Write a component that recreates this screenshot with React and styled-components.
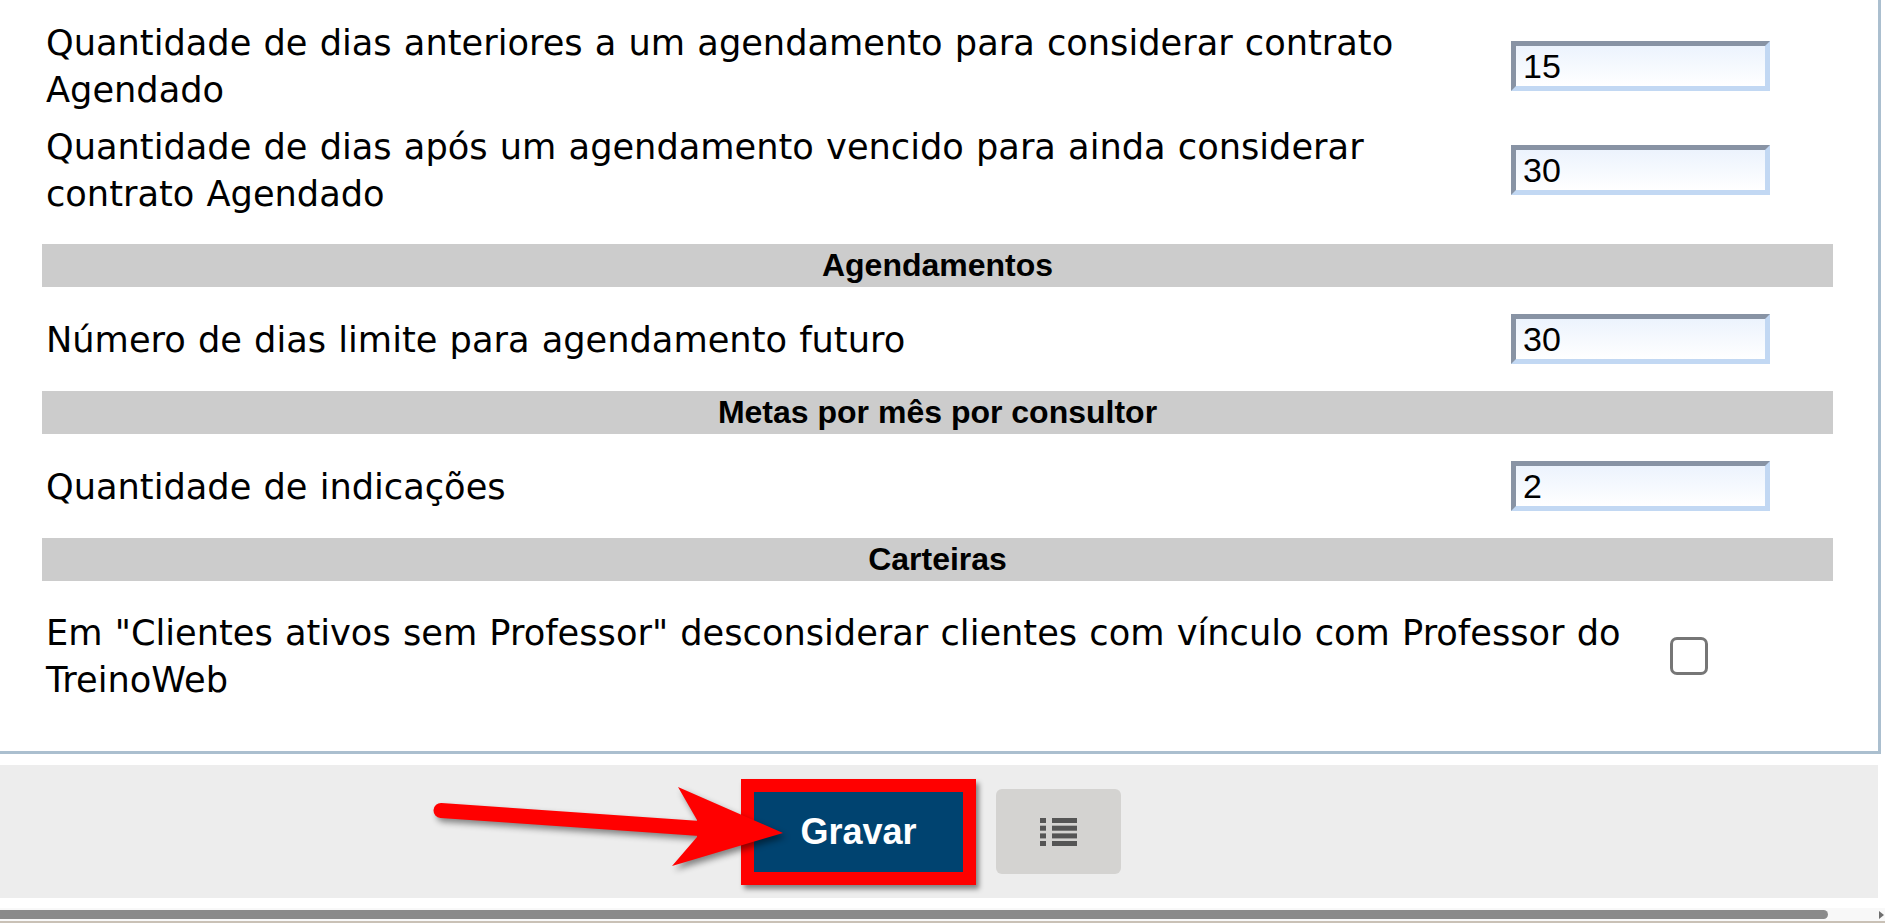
import React from 'react';
import styled, { createGlobalStyle } from 'styled-components';

const GlobalStyle = createGlobalStyle`
  html, body {
    margin: 0;
    padding: 0;
    background: #fff;
  }
  body {
    width: 1885px;
    height: 923px;
    overflow: hidden;
    font-family: "DejaVu Sans", Verdana, sans-serif;
  }
`;

const rows = [
  { type: 'input', label: 'Quantidade de dias anteriores a um agendamento para considerar contrato Agendado', value: '15' },
  { type: 'input', label: 'Quantidade de dias após um agendamento vencido para ainda considerar contrato Agendado', value: '30' },
  { type: 'section', title: 'Agendamentos', gap: 22 },
  { type: 'input', label: 'Número de dias limite para agendamento futuro', value: '30' },
  { type: 'section', title: 'Metas por mês por consultor' },
  { type: 'input', label: 'Quantidade de indicações', value: '2' },
  { type: 'section', title: 'Carteiras' },
  { type: 'check', label: 'Em "Clientes ativos sem Professor" desconsiderar clientes com vínculo com Professor do TreinoWeb' },
];

const ListIcon = () => (
  <svg width="37" height="28" viewBox="0 0 37 28">
    {[0, 7.7, 15.4, 23].map((y) => (
      <g key={y} fill="#555">
        <rect x="0" y={y} width="6" height="5" />
        <rect x="12" y={y} width="25" height="5" />
      </g>
    ))}
  </svg>
);

const App = () => {
  return (
    <Page>
      <GlobalStyle />
      <Panel>
        {rows.map((row, i) => {
          if (row.type === 'section') {
            return (
              <SectionBar key={i} $gap={row.gap || 0}>
                {row.title}
              </SectionBar>
            );
          }
          if (row.type === 'check') {
            return (
              <Row key={i} $labelWidth={1608} $height={150}>
                <Label>{row.label}</Label>
                <CheckCell>
                  <CheckBox type="checkbox" />
                </CheckCell>
              </Row>
            );
          }
          return (
            <Row key={i} $labelWidth={1422} $height={104}>
              <Label>{row.label}</Label>
              <InputCell>
                <NumberInput defaultValue={row.value} />
              </InputCell>
            </Row>
          );
        })}
      </Panel>

      <Footer>
        <SaveFrame>
          <SaveButton>Gravar</SaveButton>
        </SaveFrame>
        <ListButton>
          <ListIcon />
        </ListButton>
      </Footer>

      <ScrollTrack>
        <ScrollThumb />
        <ScrollArrow />
      </ScrollTrack>
      <BottomLine />

      <Arrow width="1885" height="923" viewBox="0 0 1885 923">
        <g fill="#ff0000" stroke="none">
          <line x1="441" y1="810.5" x2="700" y2="828.5" stroke="#ff0000" strokeWidth="15" strokeLinecap="round" />
          <polygon points="697,820 678,787 783,833 672,866 697,837" />
        </g>
      </Arrow>
    </Page>
  );
};

export default App;

const Page = styled.div`
  position: relative;
  width: 1885px;
  height: 923px;
  overflow: hidden;
`;

const Panel = styled.div`
  box-sizing: border-box;
  width: 1881px;
  padding: 14px 45px 20px 42px;
  border-right: 3px solid #abbfcf;
  border-bottom: 3px solid #abbfcf;
  background: #fff;
`;

const Row = styled.div`
  display: grid;
  grid-template-columns: ${({ $labelWidth }) => $labelWidth}px 1fr;
  align-items: center;
  height: ${({ $height }) => $height}px;
`;

const Label = styled.div`
  padding-left: 4px;
  font-family: "DejaVu Sans", Verdana, sans-serif;
  font-size: 35.2px;
  line-height: 47px;
  word-spacing: 1px;
  color: #000;
`;

const InputCell = styled.div`
  padding-left: 47px;
  display: flex;
  align-items: center;
`;

const NumberInput = styled.input`
  box-sizing: border-box;
  width: 259px;
  height: 50px;
  margin: 0;
  padding: 0 0 0 7px;
  border-style: solid;
  border-width: 5px;
  border-color: #8893a4 #c2d8f3 #c2d8f3 #8893a4;
  background: linear-gradient(#ecf3fd, #ffffff);
  font-family: "Liberation Sans", Arial, sans-serif;
  font-size: 34px;
  color: #000;
  outline: none;
`;

const CheckCell = styled.div`
  padding-left: 20px;
  display: flex;
  align-items: center;
`;

const CheckBox = styled.input`
  appearance: none;
  box-sizing: border-box;
  width: 38px;
  height: 38px;
  margin: 0;
  border: 3px solid #767676;
  border-radius: 7px;
  background: #fff;
`;

const SectionBar = styled.div`
  margin-top: ${({ $gap }) => $gap}px;
  height: 43px;
  background: #cccccc;
  text-align: center;
  font-family: "Liberation Sans", Arial, sans-serif;
  font-weight: bold;
  font-size: 32px;
  line-height: 43px;
  color: #000;
`;

const Footer = styled.div`
  box-sizing: border-box;
  width: 1878px;
  height: 133px;
  margin-top: 11px;
  padding-right: 16px;
  background: #ededed;
  display: flex;
  align-items: center;
  justify-content: center;
  gap: 20px;
`;

const SaveFrame = styled.div`
  border: 13px solid #ff0000;
  box-shadow: 3px 4px 5px rgba(0, 0, 0, 0.45);
  display: flex;
`;

const SaveButton = styled.button`
  width: 209px;
  height: 80px;
  margin: 0;
  border: none;
  background: #004370;
  color: #fff;
  font-family: "Liberation Sans", Arial, sans-serif;
  font-weight: bold;
  font-size: 36px;
  cursor: pointer;
`;

const ListButton = styled.button`
  width: 125px;
  height: 85px;
  margin: 0;
  border: none;
  border-radius: 6px;
  background: #d4d3d1;
  display: flex;
  align-items: center;
  justify-content: center;
  cursor: pointer;
`;

const ScrollTrack = styled.div`
  position: relative;
  height: 13px;
  margin-top: 10px;
  background: #f8f8f8;
  display: flex;
  align-items: center;
`;

const ScrollThumb = styled.div`
  width: 1828px;
  height: 9px;
  background: #8a8a8a;
  border-radius: 0 5px 5px 0;
`;

const ScrollArrow = styled.div`
  position: absolute;
  right: 1px;
  top: 3px;
  width: 0;
  height: 0;
  border-top: 4px solid transparent;
  border-bottom: 4px solid transparent;
  border-left: 5px solid #6e6e6e;
`;

const BottomLine = styled.div`
  height: 2px;
  background: #c9c1b6;
`;

const Arrow = styled.svg`
  position: absolute;
  left: 0;
  top: 0;
  pointer-events: none;
  filter: drop-shadow(3px 4px 3px rgba(0, 0, 0, 0.45));
`;
